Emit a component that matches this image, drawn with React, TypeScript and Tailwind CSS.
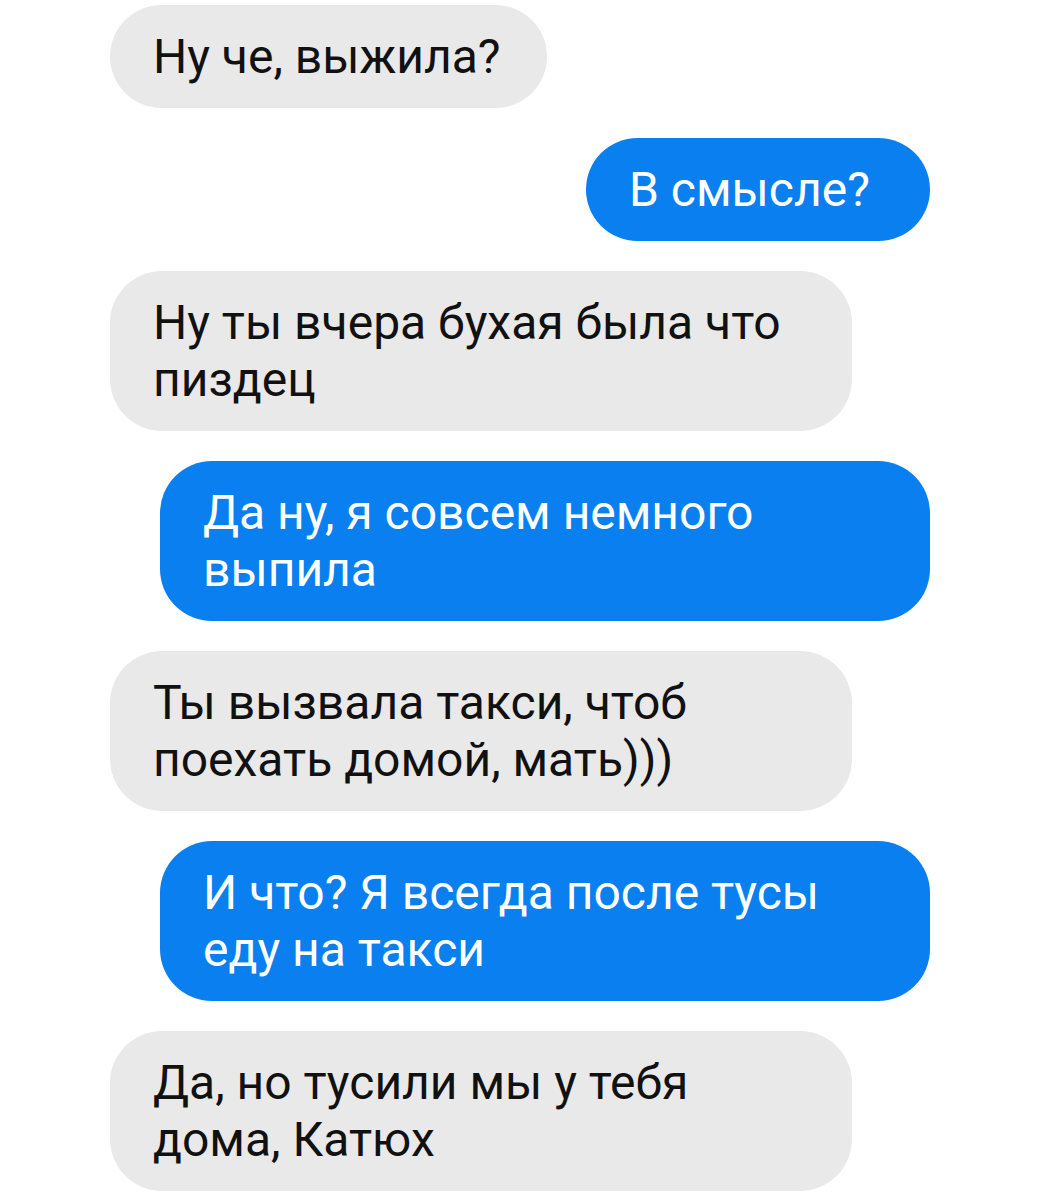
import React from "react";

type Msg = { side: "in" | "out"; lines: string[]; w: string };

const msgs: Msg[] = [
  { side: "in", lines: ["Ну че, выжила?"], w: "w-[437px]" },
  { side: "out", lines: ["В смысле?"], w: "w-[344px]" },
  { side: "in", lines: ["Ну ты вчера бухая была что", "пиздец"], w: "w-[742px]" },
  { side: "out", lines: ["Да ну, я совсем немного", "выпила"], w: "w-[770px]" },
  { side: "in", lines: ["Ты вызвала такси, чтоб", "поехать домой, мать)))"], w: "w-[742px]" },
  { side: "out", lines: ["И что? Я всегда после тусы", "еду на такси"], w: "w-[770px]" },
  { side: "in", lines: ["Да, но тусили мы у тебя", "дома, Катюх"], w: "w-[742px]" },
];

export default function App() {
  return (
    <div
      className="w-[1052px] h-[1200px] bg-white overflow-hidden flex flex-col gap-[30px] pt-[5px] pl-[110px] pr-[122px]"
      style={{ fontFamily: "Roboto, 'Noto Sans', sans-serif" }}
    >
      {msgs.map((m, i) => (
        <div
          key={i}
          className={
            m.side === "in"
              ? "flex justify-start"
              : "flex justify-end"
          }
        >
          <div
            className={
              (m.side === "in"
                ? "bg-[#e9e9e9] text-[#111111] "
                : "bg-[#0a7ff0] text-white ") +
              m.w +
              " rounded-[52px] px-[43px] py-[23px] text-[48px] leading-[57px]"
            }
          >
            {m.lines.map((l, j) => (
              <div key={j} className="whitespace-nowrap">
                {l}
              </div>
            ))}
          </div>
        </div>
      ))}
    </div>
  );
}
